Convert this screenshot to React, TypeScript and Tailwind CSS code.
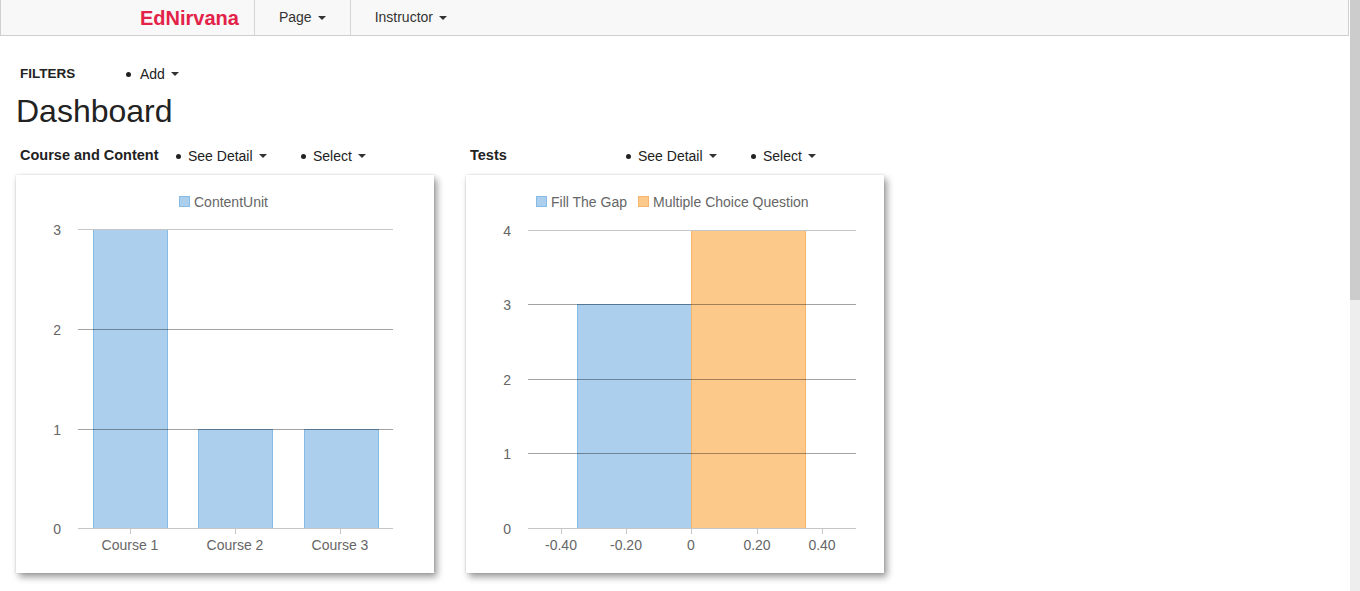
import React from 'react';

const font = { fontFamily: '"Liberation Sans", Arial, sans-serif' };

const Caret = () => (
  <span className="ml-[6px] inline-block w-0 h-0 border-l-[4px] border-r-[4px] border-t-[4px] border-l-transparent border-r-transparent border-t-[#333] align-middle" />
);

const Dropdown = ({ label, gap = 7 }: { label: string; gap?: number }) => (
  <span className="flex items-center text-[14px] text-[#222]">
    <span className="w-[5px] h-[5px] rounded-full bg-[#222]" style={{ marginRight: gap }} />
    <span>{label}</span>
    <Caret />
  </span>
);

const SectionHeader = ({ title }: { title: string }) => (
  <div className="flex items-center h-[20px] w-[418px]">
    <span className="w-[160px] pl-[4px] text-[14.5px] font-bold text-[#222] whitespace-nowrap">{title}</span>
    <span className="w-[125px]"><Dropdown label="See Detail" /></span>
    <Dropdown label="Select" />
  </div>
);

const GRID_SOFT = '#c6c6c6';
const GRID_DARK = 'rgba(0,0,0,0.36)';
const BLUE = '#abcfec';
const BLUE_LINE = '#86bbe5';
const ORANGE = '#fdc98a';
const ORANGE_LINE = '#f5b56c';

function CourseChart() {
  const rows = [
    { v: '3', y: 54.5 },
    { v: '2', y: 154.5 },
    { v: '1', y: 254.5 },
    { v: '0', y: 353.5 },
  ];
  const bars = [
    { x: 77, top: 54.5, label: 'Course 1', cx: 114 },
    { x: 182, top: 254.5, label: 'Course 2', cx: 219 },
    { x: 288, top: 254.5, label: 'Course 3', cx: 324 },
  ];
  return (
    <svg width="418" height="398" style={font}>
      <rect x="163.5" y="21.5" width="10" height="10" fill={BLUE} stroke={BLUE_LINE} />
      <text x="178" y="32" fontSize="14" fill="#666">ContentUnit</text>
      {bars.map((b) => (
        <rect key={b.label} x={b.x + 0.5} y={b.top} width="74" height={353.5 - b.top} fill={BLUE} stroke={BLUE_LINE} />
      ))}
      {rows.map((r, i) => (
        <g key={r.v}>
          <line x1="62" x2="377" y1={r.y} y2={r.y} stroke={i === 0 || i === 3 ? GRID_SOFT : GRID_DARK} />
          <text x="45" y={r.y + 5} fontSize="14" fill="#666" textAnchor="end">{r.v}</text>
        </g>
      ))}
      {bars.map((b) => (
        <g key={b.label + 't'}>
          <line x1={b.cx + 0.5} x2={b.cx + 0.5} y1="354" y2="359" stroke={GRID_SOFT} />
          <text x={b.cx} y="375" fontSize="14" fill="#666" textAnchor="middle">{b.label}</text>
        </g>
      ))}
    </svg>
  );
}

function TestsChart() {
  const rows = [
    { v: '4', y: 55.5 },
    { v: '3', y: 129.5 },
    { v: '2', y: 204.5 },
    { v: '1', y: 278.5 },
    { v: '0', y: 353.5 },
  ];
  const ticks = [
    { l: '-0.40', x: 95 },
    { l: '-0.20', x: 160 },
    { l: '0', x: 225 },
    { l: '0.20', x: 291 },
    { l: '0.40', x: 356 },
  ];
  return (
    <svg width="418" height="398" style={font}>
      <rect x="70.5" y="21.5" width="10" height="10" fill={BLUE} stroke={BLUE_LINE} />
      <text x="85" y="32" fontSize="14" fill="#666">Fill The Gap</text>
      <rect x="172.5" y="21.5" width="10" height="10" fill={ORANGE} stroke={ORANGE_LINE} />
      <text x="187" y="32" fontSize="14" fill="#666">Multiple Choice Question</text>
      <rect x="111.5" y="129.5" width="114" height="224" fill={BLUE} stroke={BLUE_LINE} />
      <rect x="225.5" y="55.5" width="114" height="298" fill={ORANGE} stroke={ORANGE_LINE} />
      {rows.map((r, i) => (
        <g key={r.v}>
          <line x1="62" x2="390" y1={r.y} y2={r.y} stroke={i === 0 || i === 4 ? GRID_SOFT : GRID_DARK} />
          <text x="45" y={r.y + 5} fontSize="14" fill="#666" textAnchor="end">{r.v}</text>
        </g>
      ))}
      {ticks.map((t) => (
        <g key={t.l}>
          <line x1={t.x + 0.5} x2={t.x + 0.5} y1="354" y2="359" stroke={GRID_SOFT} />
          <text x={t.x} y="375" fontSize="14" fill="#666" textAnchor="middle">{t.l}</text>
        </g>
      ))}
    </svg>
  );
}

const Card = ({ children }: { children: React.ReactNode }) => (
  <div className="w-[418px] h-[398px] bg-white shadow-[3px_4px_7px_rgba(0,0,0,0.4),0_0_2px_rgba(0,0,0,0.15)]">
    {children}
  </div>
);

export default function App() {
  return (
    <div className="flex w-[1360px] h-[591px] overflow-hidden bg-white text-[#333]" style={font}>
      <div className="flex-1 flex flex-col">
        <nav className="flex h-[36px] w-[1349px] bg-[#f8f8f8] border border-t-0 border-[#cfcfcf] text-[14px]">
          <div className="flex items-center pl-[139px] pr-[15px] text-[20px] font-bold text-[#e32249]">EdNirvana</div>
          <div className="flex items-center px-[24px] border-l border-[#d6d6d6]">
            Page<Caret />
          </div>
          <div className="flex items-center px-[24px] border-l border-[#d6d6d6]">
            Instructor<Caret />
          </div>
        </nav>

        <div className="pl-[16px] pt-[28px]">
          <div className="flex items-center h-[20px]">
            <span className="w-[110px] pl-[4px] text-[13.5px] font-bold text-[#222]">FILTERS</span>
            <Dropdown label="Add" gap={9} />
          </div>
          <h1 className="mt-[9px] h-[36px] leading-[36px] text-[32px] text-[#222]">Dashboard</h1>
          <div className="mt-[17px] flex gap-[32px]">
            <SectionHeader title="Course and Content" />
            <SectionHeader title="Tests" />
          </div>
          <div className="mt-[9px] flex gap-[32px]">
            <Card><CourseChart /></Card>
            <Card><TestsChart /></Card>
          </div>
        </div>
      </div>

      <div className="w-[10px] h-full bg-[#eeeeee] flex flex-col">
        <div className="h-[300px] bg-[#cccccc]" />
      </div>
    </div>
  );
}
